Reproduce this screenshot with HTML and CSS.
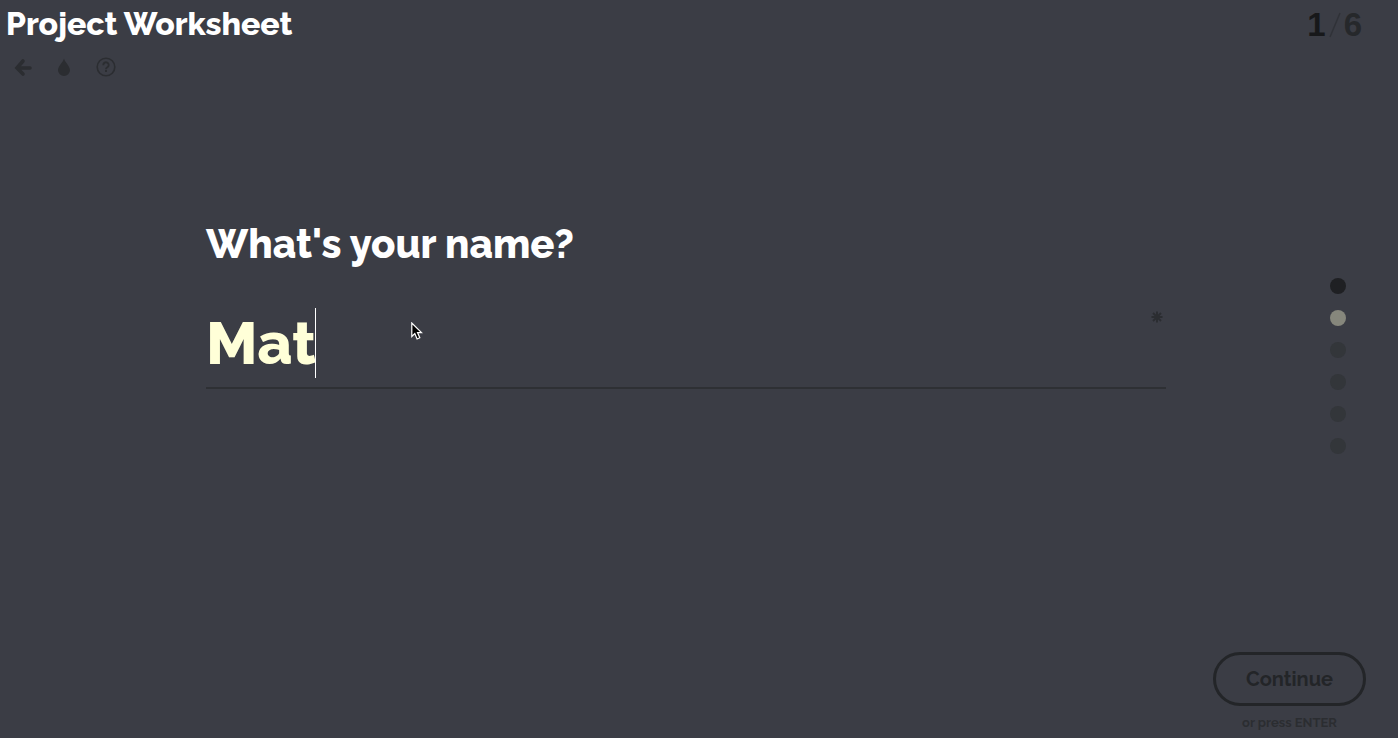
FILE: index.html
```html
<!DOCTYPE html>
<html lang="en">
<head>
<meta charset="utf-8">
<title>Project Worksheet</title>
<link rel="stylesheet" href="styles.css">
</head>
<body>
<header class="header">
  <div class="header-main">
    <h1 class="title">Project Worksheet</h1>
    <nav class="tools">
      <button class="tool" type="button" aria-label="Back"><svg width="20" height="20" viewBox="0 0 20 20"><path d="M9 4 3 11l6 6M3.500 11H16" fill="none" stroke="currentColor" stroke-width="3.600" stroke-linecap="round"/></svg></button>
      <button class="tool" type="button" aria-label="Theme"><svg width="20" height="20" viewBox="0 0 20 20"><path d="M9 1.500C8 5.500 3 9 3 13.300a6 5.700 0 0 0 12 0C15 9 10 5.500 9 1.500Z" fill="currentColor"/></svg></button>
      <button class="tool" type="button" aria-label="Help"><svg width="20" height="20" viewBox="0 0 20 20"><g fill="none" stroke="currentColor"><circle cx="10" cy="10" r="8.800" stroke-width="1.600"/><path d="M7.300 8.300V8a2.700 2.700 0 1 1 4.200 2.200c-1 .7-1.500 1-1.500 2" stroke-width="1.900"/></g><rect x="9" y="13" width="2" height="2" fill="currentColor"/></svg></button>
    </nav>
  </div>
  <div class="counter"><span class="current">1</span><svg class="slash" width="12" height="26" viewBox="0 0 12 26"><path d="M1 25 11 1" stroke="currentColor" stroke-width="1.500"/></svg><span>6</span></div>
</header>
<main class="main">
  <form class="question" id="worksheet">
    <label class="label" for="name">What's your name?</label>
    <div class="field">
      <input class="input" id="name" type="text" value="Mat" required autocomplete="off">
      <span class="caret"></span>
      <svg class="required" width="12" height="12" viewBox="0 0 12 12"><path d="M6 .5v11M.5 6h11M2 2l8 8M10 2l-8 8" stroke="currentColor" stroke-width="1.900"/></svg>
      <svg class="pointer" width="12" height="19" viewBox="0 0 12 19"><path d="M.8 1v13.500l3-2.900 2.300 5.400 2.700-1.200-2.300-5.200H10.500Z" fill="#000" stroke="#fff" stroke-width="1.200"/></svg>
    </div>
  </form>
  <nav class="dots" aria-label="Questions">
    <button class="dot dot-current" type="button" aria-label="Question 1"></button>
    <button class="dot dot-hover" type="button" aria-label="Question 2"></button>
    <button class="dot" type="button" aria-label="Question 3"></button>
    <button class="dot" type="button" aria-label="Question 4"></button>
    <button class="dot" type="button" aria-label="Question 5"></button>
    <button class="dot" type="button" aria-label="Question 6"></button>
  </nav>
</main>
<footer class="footer">
  <div class="actions">
    <button class="continue" type="submit" form="worksheet">Continue</button>
    <span class="hint">or press ENTER</span>
  </div>
</footer>
</body>
</html>
```
FILE: styles.css
```css
* { box-sizing: border-box; }

body {
  margin: 0;
  min-height: 100vh;
  display: flex;
  flex-direction: column;
  background: #3b3d45;
  color: #fff;
  font-family: Raleway, Lato, sans-serif;
  font-weight: 700;
}

button {
  font: inherit;
  background: none;
  border: 0;
  padding: 0;
}

.header {
  display: flex;
  justify-content: space-between;
  padding: 4px 36px 0 6px;
}

.title {
  margin: 0;
  font-size: 32px;
  line-height: 40px;
  font-weight: 800;
}

.tools {
  display: flex;
  gap: 21px;
  padding: 13px 8px;
}

.tool {
  height: 20px;
  color: #2b2d31;
}

.tool svg { display: block; }

.counter {
  display: flex;
  align-items: center;
  gap: 3px;
  height: 42px;
  font-family: "Liberation Sans", sans-serif;
  font-size: 33px;
  color: #26282b;
}

.current { color: #17181a; }
.slash { color: #303238; }

.main {
  flex: 1;
  display: grid;
  grid-template-columns: 1fr minmax(0, 960px) 1fr;
  padding: 129px 26px 0 0;
}

.question { grid-column: 2; }

.label {
  display: block;
  font-size: 40px;
  line-height: 50px;
  font-weight: 800;
}

.field {
  position: relative;
  margin-top: 39px;
  border-bottom: 2px solid #2e3034;
}

.input {
  display: block;
  width: 100%;
  height: 79px;
  padding: 0 0 9px;
  border: 0;
  outline: 0;
  background: none;
  color: #ffffd8;
  caret-color: transparent;
  font: inherit;
  font-size: 60px;
  font-weight: 800;
}

.caret {
  position: absolute;
  left: 109px;
  top: 0;
  width: 1px;
  height: 70px;
  background: #fff;
}

.required {
  position: absolute;
  right: 3px;
  top: 3px;
  color: #2b2d31;
}

.pointer {
  position: absolute;
  left: 205px;
  top: 14px;
}

.dots {
  display: flex;
  flex-direction: column;
  align-items: flex-end;
  gap: 16px;
  padding-top: 59px;
  margin-right: 26px;
}

.dot {
  width: 16px;
  height: 16px;
  border-radius: 50%;
  background: #33363a;
}

.dot-current { background: #1f2023; }
.dot-hover { background: #86877c; }

.footer {
  display: flex;
  justify-content: flex-end;
  padding: 0 32px 5px;
}

.actions {
  display: flex;
  flex-direction: column;
  align-items: center;
  gap: 7px;
}

.continue {
  padding: 0 30px;
  height: 54px;
  border: 3px solid #232528;
  border-radius: 27px;
  color: #232528;
  font-size: 20px;
}

.hint {
  color: #2b2d31;
  font-size: 13px;
  line-height: 20px;
}
```
